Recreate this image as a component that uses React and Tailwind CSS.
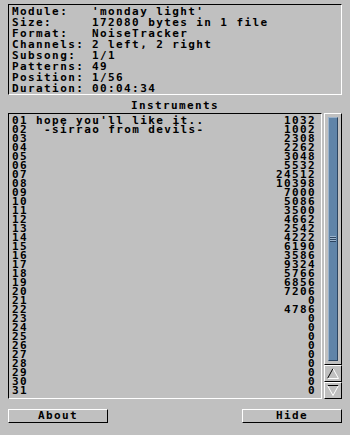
import React from 'react';

const info = [
  ['Module:', "'monday light'"],
  ['Size:', '172080 bytes in 1 file'],
  ['Format:', 'NoiseTracker'],
  ['Channels:', '2 left, 2 right'],
  ['Subsong:', '1/1'],
  ['Patterns:', '49'],
  ['Position:', '1/56'],
  ['Duration:', '00:04:34'],
];

const sizes = [
  1032, 1002, 2308, 2262, 3048, 5532, 24512, 10398, 7000, 5086, 3500, 4662, 2542, 4222, 6190, 3586,
  9324, 5766, 6856, 7206, 0, 4786, 0, 0, 0, 0, 0, 0, 0, 0, 0,
];

const names = { 0: "hope you'll like it..", 1: ' -sirrao from devils-' };

function Button({ children }) {
  return (
    <button className="w-[100px] h-[14px] border-t border-l border-white border-b border-r border-b-black border-r-black text-center leading-[12px]">
      {children}
    </button>
  );
}

export default function App() {
  return (
    <div className="w-[350px] h-[435px] bg-[#c0c0c0] px-2 pt-1 text-black font-bold text-[11px] tracking-[1.4px] font-['DejaVu_Sans_Mono',monospace]">
      <div className="h-[91px] border-t border-l border-black border-b border-r border-b-white border-r-white pl-[3px] pt-[1px] leading-[11px]">
        {info.map(([k, v]) => (
          <div key={k} className="flex whitespace-pre">
            <span className="w-[80px]">{k}</span>
            <span>{v}</span>
          </div>
        ))}
      </div>

      <div className="h-[18px] pt-[5px] leading-[11px] text-center">Instruments</div>

      <div className="flex gap-[2px]">
        <div className="w-[314px] h-[286px] border-t border-l border-black border-b border-r border-b-white border-r-white pl-[3px] pr-[5px] pt-[2px] leading-[9px]">
          {sizes.map((s, i) => (
            <div key={i} className="flex whitespace-pre">
              <span className="w-[24px]">{String(i + 1).padStart(2, '0')}</span>
              <span className="flex-1">{names[i] || ''}</span>
              <span>{s}</span>
            </div>
          ))}
        </div>

        <div className="w-[18px] h-[286px] flex flex-col">
          <div className="h-[252px] border-t border-l border-white border-b border-r border-b-black border-r-black p-[3px] flex">
            <div className="flex-1 bg-[#6084a8] border-t border-l border-[#9bb3cc] border-b border-r border-b-[#2c4460] border-r-[#2c4460] flex items-center justify-center">
              <svg width="6" height="7" viewBox="0 0 6 7">
                <path d="M0 1.5h6M0 3.5h6M0 5.5h6" stroke="#2c4460" strokeWidth="1" />
                <path d="M0 0.5h6M0 2.5h6M0 4.5h6" stroke="#9bb3cc" strokeWidth="1" />
              </svg>
            </div>
          </div>
          <div className="h-[17px] border-t border-l border-white border-b border-r border-b-black border-r-black flex items-center justify-center">
            <svg width="12" height="11" viewBox="0 0 12 11">
              <path d="M6 0.5L0.5 10.5" stroke="#000" strokeWidth="1" fill="none" />
              <path d="M6 0.5L11.5 10.5" stroke="#fff" strokeWidth="1" fill="none" />
              <path d="M0.5 10.5H11.5" stroke="#fff" strokeWidth="1" />
            </svg>
          </div>
          <div className="h-[17px] border-t border-l border-white border-b border-r border-b-black border-r-black flex items-center justify-center">
            <svg width="12" height="11" viewBox="0 0 12 11">
              <path d="M0.5 0.5H11.5" stroke="#000" strokeWidth="1" />
              <path d="M0.5 0.5L6 10.5" stroke="#fff" strokeWidth="1" fill="none" />
              <path d="M11.5 0.5L6 10.5" stroke="#fff" strokeWidth="1" fill="none" />
            </svg>
          </div>
        </div>
      </div>

      <div className="flex justify-between mt-[10px]">
        <Button>About</Button>
        <Button>Hide</Button>
      </div>
    </div>
  );
}
